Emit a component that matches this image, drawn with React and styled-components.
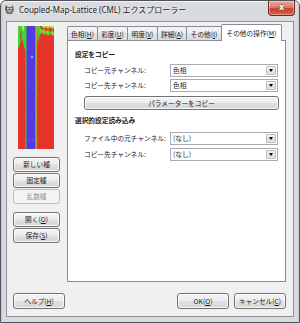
import React from 'react';
import styled, { createGlobalStyle } from 'styled-components';

const Global = createGlobalStyle`
  html, body { margin: 0; padding: 0; background: #ffffff; }
  body {
    width: 300px; height: 323px; overflow: hidden;
    font-family: "Noto Sans CJK JP", "Noto Sans", sans-serif;
  }
  * { box-sizing: border-box; }
`;

const FONT = `"Noto Sans CJK JP", "Noto Sans", sans-serif`;

const Window = styled.div`
  width: 300px;
  height: 323px;
  border: 1px solid #4f545b;
  border-radius: 6px 6px 0 0;
  background: linear-gradient(90deg, #c9ccd1 0px, #d9dbdf 3px, #d9dbdf 296px, #c9ccd1 298px);
  display: flex;
  flex-direction: column;
  box-shadow: inset 0 1px 0 #f4f5f7;
`;

const TitleBar = styled.div`
  height: 20px;
  display: flex;
  align-items: flex-start;
  padding-left: 3px;
`;

const AppIcon = styled.svg`
  margin-top: 3px;
  flex: none;
`;

const Title = styled.div`
  margin-left: 4px;
  margin-top: 4px;
  font: 8px/10px "Noto Sans", ${FONT};
  color: #1f1f1f;
  white-space: nowrap;
  text-shadow: 0 0 3px rgba(255, 255, 255, 0.9);
`;

const CloseButton = styled.div`
  margin-left: auto;
  margin-right: 4px;
  width: 27px;
  height: 15px;
  border: 1px solid #6f2b25;
  border-top: none;
  border-radius: 0 0 4px 4px;
  background: linear-gradient(#e9a99c 0%, #dc7f70 45%, #c7402f 55%, #d8604f 100%);
  box-shadow: inset 0 0 0 1px rgba(255, 255, 255, 0.35);
  display: flex;
  align-items: center;
  justify-content: center;
  color: #ffffff;
  font: bold 8px/1 "DejaVu Sans", sans-serif;
  text-shadow: 0 0 2px #5a1a14;
`;

const Client = styled.div`
  flex: 1;
  margin: 0 5px 5px 5px;
  border: 1px solid #8e939a;
  background: #f0f0f0;
  display: flex;
  flex-direction: column;
  padding: 2px 7px 0 6px;
`;

const TopArea = styled.div`
  height: 258px;
  display: flex;
  gap: 7px;
`;

const LeftColumn = styled.div`
  width: 47px;
  display: flex;
  flex-direction: column;
`;

const Preview = styled.svg`
  margin: 2px 0 8px 5px;
  display: block;
`;

const ButtonStack = styled.div`
  display: flex;
  flex-direction: column;
  gap: ${p => p.$gap}px;
  margin-bottom: ${p => p.$mb || 0}px;
`;

const Btn = styled.button`
  height: ${p => p.$h || 15}px;
  width: ${p => (p.$w ? `${p.$w}px` : '100%')};
  margin: 0;
  padding: 0;
  border: 1px solid ${p => (p.disabled ? '#bcc0c4' : '#737373')};
  border-radius: 3px;
  background: ${p =>
    p.disabled
      ? '#f4f4f4'
      : 'linear-gradient(#f4f4f4 0%, #ededed 48%, #e0e0e0 52%, #d6d6d6 100%)'};
  box-shadow: ${p => (p.disabled ? 'none' : 'inset 0 0 0 1px rgba(255,255,255,0.8)')};
  color: ${p => (p.disabled ? '#939393' : '#1a1a1a')};
  font: 6.7px/1 ${FONT};
  display: flex;
  align-items: center;
  justify-content: center;
  white-space: nowrap;
  u { text-decoration-thickness: 0.5px; text-underline-offset: 1px; }
`;

const Panel = styled.div`
  width: 219px;
  display: flex;
  flex-direction: column;
`;

const TabRow = styled.div`
  height: 16px;
  display: flex;
  align-items: flex-end;
  position: relative;
  z-index: 1;
`;

const Tab = styled.div`
  width: ${p => p.$w}px;
  height: ${p => (p.$active ? 17 : 14)}px;
  margin-left: -1px;
  margin-bottom: ${p => (p.$active ? -1 : 0)}px;
  &:first-child { margin-left: 0; }
  border: 1px solid #898c95;
  border-bottom: none;
  border-radius: 2px 2px 0 0;
  background: ${p =>
    p.$active ? '#ffffff' : 'linear-gradient(#f4f4f4 0%, #ededed 50%, #e2e2e2 50%, #dadada 100%)'};
  position: relative;
  z-index: ${p => (p.$active ? 2 : 1)};
  display: flex;
  align-items: center;
  justify-content: center;
  padding-top: ${p => (p.$active ? 0 : 1)}px;
  font: 6.7px/1 ${FONT};
  color: #1a1a1a;
  white-space: nowrap;
  u { text-decoration-thickness: 0.5px; text-underline-offset: 1px; }
`;

const PanelBody = styled.div`
  flex: 1;
  border: 1px solid #898c95;
  background: #ffffff;
  padding: 7px 0 0 7px;
  display: flex;
  flex-direction: column;
`;

const SectionTitle = styled.div`
  height: 12px;
  margin-top: ${p => p.$mt || 0}px;
  font: bold 6.7px/12px ${FONT};
  color: #1a1a1a;
`;

const FieldRow = styled.div`
  display: flex;
  align-items: center;
  height: 13px;
  margin-top: ${p => p.$mt || 0}px;
  padding-left: 9px;
`;

const Label = styled.div`
  width: 86px;
  font: 6.7px/1 ${FONT};
  color: #1a1a1a;
  white-space: nowrap;
`;

const ComboBox = styled.div`
  width: 108px;
  height: 13px;
  border: 1px solid #a9abb0;
  background: #ffffff;
  display: flex;
  align-items: stretch;
`;

const ComboText = styled.div`
  flex: 1;
  padding-left: 2px;
  display: flex;
  align-items: center;
  font: 6.7px/1 ${FONT};
  color: #1a1a1a;
`;

const ComboArrow = styled.div`
  width: 10px;
  margin: 1px;
  border: 1px solid #b9bcc1;
  border-radius: 1px;
  background: linear-gradient(#f6f6f6, #e6e6e6 50%, #d9d9d9 50%, #e8e8e8);
  display: flex;
  align-items: center;
  justify-content: center;
  &::after {
    content: '';
    border-left: 2.5px solid transparent;
    border-right: 2.5px solid transparent;
    border-top: 3px solid #000000;
  }
`;

const WideRow = styled.div`
  margin-top: 4px;
  padding-left: 9px;
`;

const BottomRow = styled.div`
  margin-top: 11px;
  display: flex;
  align-items: center;
  gap: 5px;
`;

const Spacer = styled.div`
  flex: 1;
`;

function Combo({ value }) {
  return (
    <ComboBox>
      <ComboText>{value}</ComboText>
      <ComboArrow />
    </ComboBox>
  );
}

function PreviewImage() {
  return (
    <Preview width="36" height="123" viewBox="0 0 36 123">
      <rect width="36" height="123" fill="#e6342b" />
      <path d="M0 0 H8 V26 Q6 22 5 16 Q4 10 3 14 Q2 20 0 22 Z" fill="#3fd63a" />
      <path d="M3 2 Q4 8 3.5 14 L2 12 Z" fill="#e6342b" />
      <path d="M4 0 H6 V6 Q5 4 4 3 Z" fill="#c7e23a" />
      <path d="M19 0 H22 V8 Q21 14 19.5 16 Z" fill="#3fd63a" />
      <path d="M22 1 Q24 6 26 2 Q28 8 30 3 Q32 9 34 4 L36 6 V9 Q34 11 32 7 Q30 12 28 7 Q26 11 24 6 Q23 9 22 8 Z" fill="#5fd83a" />
      <path d="M24 0 H36 V2 Q34 4 32 1 Q30 4 28 1 Q26 3 24 1 Z" fill="#b6e03a" />
      <rect x="8" y="0" width="10" height="123" fill="#5838e2" />
      <rect x="7.5" y="0" width="1" height="123" fill="#35cf3c" />
      <rect x="17.5" y="0" width="1.2" height="123" fill="#9fd83a" />
      <circle cx="14" cy="31" r="1.3" fill="#3fc0ff" />
      <circle cx="12" cy="60" r="0.6" fill="#3fa8ff" />
      <circle cx="15" cy="62" r="0.6" fill="#3fa8ff" />
      <circle cx="14" cy="88" r="0.6" fill="#3fa8ff" />
      <circle cx="11" cy="114" r="0.6" fill="#3fa8ff" />
      <circle cx="15" cy="114" r="0.6" fill="#3fa8ff" />
    </Preview>
  );
}

const tabs = [
  { label: '色相', key: 'H', w: 31 },
  { label: '彩度', key: 'U', w: 31 },
  { label: '明度', key: 'V', w: 31 },
  { label: '詳細', key: 'A', w: 30 },
  { label: 'その他', key: 'I', w: 36 },
  { label: 'その他の操作', key: 'M', w: 61, active: true },
];

export default function App() {
  return (
    <>
      <Global />
      <Window>
        <TitleBar>
          <AppIcon width="11" height="11" viewBox="0 0 11 11">
            <path d="M1 3 L2.5 1 L3.5 3 L7 3 L8.5 1 L9.5 3.5 Q10.5 6 9 8 L8 10 H3 L2 8 Q0.5 6 1 3 Z" fill="#6d6a62" />
            <path d="M3 5 Q5.5 7 8 5 Q8 8 5.5 9 Q3 8 3 5 Z" fill="#a9a49a" />
            <circle cx="4" cy="4.5" r="0.8" fill="#ffffff" />
            <circle cx="7" cy="4.5" r="0.8" fill="#ffffff" />
          </AppIcon>
          <Title>Coupled-Map-Lattice (CML) エクスプローラー</Title>
          <CloseButton>x</CloseButton>
        </TitleBar>
        <Client>
          <TopArea>
            <LeftColumn>
              <PreviewImage />
              <ButtonStack $gap={1} $mb={8}>
                <Btn>新しい種</Btn>
                <Btn>固定種</Btn>
                <Btn disabled>乱数種</Btn>
              </ButtonStack>
              <ButtonStack $gap={1}>
                <Btn>開く(<u>O</u>)</Btn>
                <Btn>保存(<u>S</u>)</Btn>
              </ButtonStack>
            </LeftColumn>
            <Panel>
              <TabRow>
                {tabs.map(t => (
                  <Tab key={t.key} $w={t.w} $active={t.active}>
                    {t.label}(<u>{t.key}</u>)
                  </Tab>
                ))}
              </TabRow>
              <PanelBody>
                <SectionTitle>設定をコピー</SectionTitle>
                <FieldRow $mt={4}>
                  <Label>コピー元チャンネル:</Label>
                  <Combo value="色相" />
                </FieldRow>
                <FieldRow $mt={2}>
                  <Label>コピー先チャンネル:</Label>
                  <Combo value="色相" />
                </FieldRow>
                <WideRow>
                  <Btn $w={195} $h={14}>パラメーターをコピー</Btn>
                </WideRow>
                <SectionTitle $mt={4}>選択的設定読み込み</SectionTitle>
                <FieldRow $mt={6}>
                  <Label>ファイル中の元チャンネル:</Label>
                  <Combo value="(なし)" />
                </FieldRow>
                <FieldRow $mt={3}>
                  <Label>コピー先チャンネル:</Label>
                  <Combo value="(なし)" />
                </FieldRow>
              </PanelBody>
            </Panel>
          </TopArea>
          <BottomRow>
            <Btn $w={52} $h={16}>ヘルプ(<u>H</u>)</Btn>
            <Spacer />
            <Btn $w={52} $h={16}>OK(<u>O</u>)</Btn>
            <Btn $w={52} $h={16}>キャンセル(<u>C</u>)</Btn>
          </BottomRow>
        </Client>
      </Window>
    </>
  );
}
